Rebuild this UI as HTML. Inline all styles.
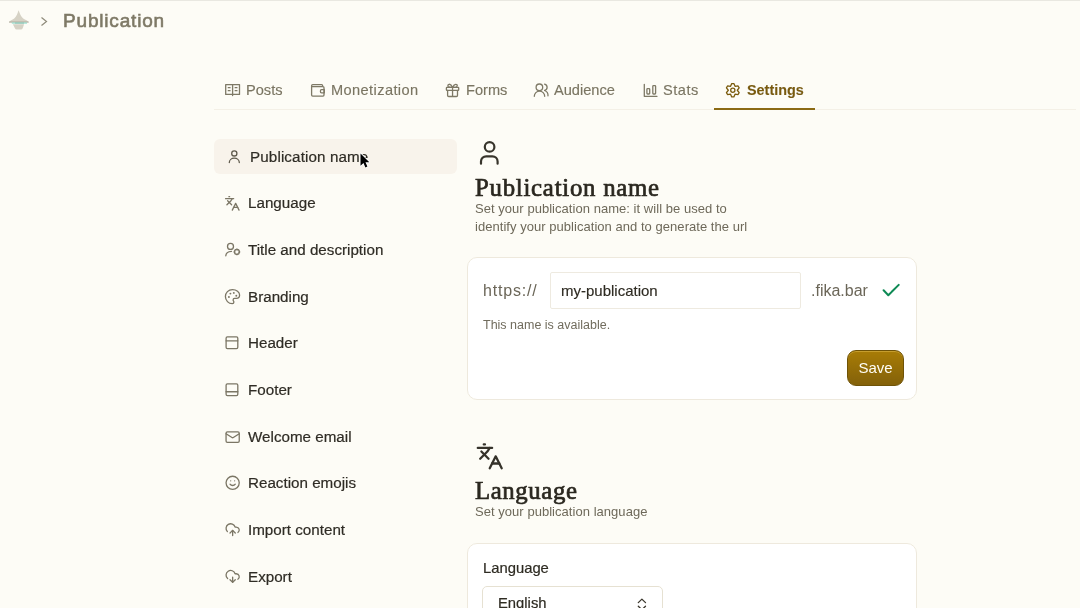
<!DOCTYPE html>
<html><head><meta charset="utf-8">
<style>
*{margin:0;padding:0;box-sizing:border-box}
html,body{width:1080px;height:608px;overflow:hidden;background:#FDFCF6;font-family:"Liberation Sans",sans-serif}
.a{will-change:transform}
.a{position:absolute;white-space:nowrap}
svg{position:absolute;overflow:visible}
.topline{left:0;top:0;width:1080px;height:1px;background:#E9E8E1}
.crumb{left:63px;top:9px;font-size:19px;font-weight:normal;-webkit-text-stroke:0.6px #7E7966;letter-spacing:0.82px;color:#7E7966;line-height:24px}
.tab{top:81px;font-size:14.6px;color:#7A7562;-webkit-text-stroke:0.15px #7A7562;line-height:18px}
.tabline{left:214px;top:109px;width:862px;height:1px;background:#F4F0E6}
.tabact{left:714px;top:108px;width:101px;height:2px;background:#8B6A14}
.nav{left:248px;font-size:15.2px;color:#2F2C25;-webkit-text-stroke:0.2px #2F2C25;line-height:18px}
.navbg{left:214px;top:139px;width:243px;height:35px;border-radius:6px;background:#F8F3EB}
.h2{font-family:"Liberation Serif",serif;font-weight:normal;-webkit-text-stroke:0.7px #2B2820;letter-spacing:0.6px;font-size:24.8px;color:#2B2820;line-height:28px;left:475px}
.sub{font-size:13px;color:#6E695A;letter-spacing:0.04px;line-height:18px;left:475px}
.card{background:#fff;border:1px solid #EEE9DD;border-radius:10px;left:467px;width:450px}
</style></head><body>
<div class="a topline"></div>

<!-- logo -->
<svg style="left:0;top:0" width="40" height="34" viewBox="0 0 40 34">
  <path d="M18.6 10.2 C17.6 13 16.6 16.6 14.2 18.4 C12.2 19.7 9.6 20.4 9 22.2 H28.7 C28.1 20.4 25.4 19.7 23.2 18.4 C20.8 16.6 19.7 13 18.6 10.2 Z" fill="#D6D2C5"/>
  <rect x="9" y="21.6" width="19.7" height="0.9" fill="#A8A494"/>
  <rect x="11.8" y="22.5" width="15.2" height="1.1" fill="#8FDCCB"/>
  <rect x="15" y="22.8" width="9" height="0.5" fill="#6E9E92"/>
  <path d="M12.9 24.3 H24.1 L22.7 28.3 Q22.2 29.6 21 29.6 H16.6 Q15.4 29.6 14.9 28.3 Z" fill="#D6D2C5"/>
</svg>
<svg style="left:0;top:0" width="60" height="34"><path d="M41.5 17.5 L46.5 21.5 L41.5 25.5" fill="none" stroke="#8E8A7A" stroke-width="1.2"/></svg>
<div class="a crumb">Publication</div>

<!-- tabs -->
<div class="a tabline"></div>
<div class="a tabact"></div>
<div class="a tab" style="left:246px">Posts</div>
<div class="a tab" style="left:331px;letter-spacing:0.4px">Monetization</div>
<div class="a tab" style="left:466px">Forms</div>
<div class="a tab" style="left:554px">Audience</div>
<div class="a tab" style="left:663px;letter-spacing:0.5px">Stats</div>
<div class="a tab" style="left:747px;font-weight:bold;color:#7A5A0B;font-size:14.4px">Settings</div>


<svg style="left:0;top:0" width="1080" height="608" viewBox="0 0 1080 608" fill="none" stroke-linecap="round" stroke-linejoin="round">
 <g stroke="#7E7966" stroke-width="1.3">
  <!-- posts book -->
  <path d="M225.7 84.6 H239.5 V94.4 H225.7 Z M232.6 84.6 V95.6"/>
  <path d="M228.2 87.7 H230.1 M228.2 90.7 H230.1 M235.1 87.7 H237 M235.1 90.7 H237" stroke-width="1.2"/>
  <!-- wallet -->
  <path d="M322.6 86.7 V85.5 Q322.6 84.6 321.6 84.6 H312.7 Q311.6 84.6 311.6 85.8 V95 Q311.6 96.1 312.7 96.1 H323 Q324 96.1 324 95 V87.8 Q324 86.7 323 86.7 H311.6"/>
  <path d="M324.3 89.6 H321.5 Q320.4 89.6 320.4 91.2 Q320.4 92.8 321.5 92.8 H324.3 Z"/>
  <!-- gift -->
  <rect x="446.4" y="87.4" width="12.3" height="3" rx="0.6"/>
  <path d="M447.6 90.4 V95.4 Q447.6 96.5 448.7 96.5 H456.4 Q457.5 96.5 457.5 95.4 V90.4 M452.55 87.4 V96.5"/>
  <path d="M452.55 87.4 Q451 84 449.3 84.3 Q447.6 84.6 448 86.2 Q448.4 87.4 452.55 87.4 Q457 87.4 457.2 86 Q457.4 84.4 455.8 84.3 Q454.1 84.2 452.55 87.4"/>
  <!-- audience -->
  <circle cx="539.4" cy="87.3" r="3.3"/>
  <path d="M534.3 96.3 A5.2 5.2 0 0 1 544.7 96.3"/>
  <path d="M544.6 84.1 A3.3 3.3 0 0 1 544.6 90.5 A5.2 5.2 0 0 1 548 95.8"/>
  <!-- stats -->
  <path d="M644.3 84.3 V96.3 H657"/>
  <rect x="646.9" y="88.6" width="2.8" height="5.4" rx="0.7"/>
  <rect x="652.8" y="85.6" width="2.8" height="8.4" rx="0.7"/>
 </g>
 <!-- gear settings -->
 <g stroke="#7A5A0B" stroke-width="1.3">
  <path d="M731.74 83.53 L733.86 83.53 L735.05 86.35 L738.08 85.97 L739.15 87.81 L737.30 90.25 L739.15 92.69 L738.08 94.53 L735.05 94.15 L733.86 96.97 L731.74 96.97 L730.55 94.15 L727.52 94.53 L726.45 92.69 L728.30 90.25 L726.45 87.81 L727.52 85.97 L730.55 86.35Z"/>
  <circle cx="732.8" cy="90.3" r="2.1"/>
 </g>
</svg>

<!-- side nav -->
<div class="a navbg"></div>
<div class="a nav" style="top:148px;left:250px;letter-spacing:0.12px">Publication name</div>
<div class="a nav" style="top:194px">Language</div>
<div class="a nav" style="top:241px">Title and description</div>
<div class="a nav" style="top:288px">Branding</div>
<div class="a nav" style="top:334px">Header</div>
<div class="a nav" style="top:381px">Footer</div>
<div class="a nav" style="top:428px">Welcome email</div>
<div class="a nav" style="top:474px">Reaction emojis</div>
<div class="a nav" style="top:521px">Import content</div>
<div class="a nav" style="top:568px">Export</div>

<!-- main section 1 -->
<div class="a h2" style="top:174px;letter-spacing:0.75px">Publication name</div>
<div class="a sub" style="top:200px">Set your publication name: it will be used to</div>
<div class="a sub" style="top:218px">identify your publication and to generate the url</div>

<div class="a card" style="top:257px;height:143px"></div>
<div class="a" style="left:483px;top:282px;font-size:16px;color:#6B6658;letter-spacing:0.8px">https://</div>
<div class="a" style="left:550px;top:272px;width:251px;height:37px;border:1px solid #EEEAE0;border-radius:2px;background:#fff"></div>
<div class="a" style="left:561px;top:282px;font-size:15px;color:#2E2B22;-webkit-text-stroke:0.15px #2E2B22">my-publication</div>
<div class="a" style="left:811px;top:282px;font-size:16px;color:#6B6658">.fika.bar</div>
<div class="a" style="left:483px;top:318px;font-size:12.5px;color:#716C5D">This name is available.</div>
<div class="a" style="left:847px;top:350px;width:57px;height:36px;border-radius:9px;background:linear-gradient(#A87C06,#83610A);border:1px solid #6F5307;box-shadow:inset 0 1px 0 rgba(255,220,120,0.35);color:#FFFDF5;font-size:15px;line-height:33px;text-align:center">Save</div>

<!-- main section 2 -->
<div class="a h2" style="top:477px">Language</div>
<div class="a sub" style="top:503px">Set your publication language</div>
<div class="a card" style="top:543px;height:100px"></div>
<div class="a" style="left:483px;top:560px;font-size:14.8px;color:#2E2B22;-webkit-text-stroke:0.2px #2E2B22">Language</div>
<div class="a" style="left:482px;top:586px;width:181px;height:40px;border:1px solid #E6E1D2;border-radius:5px;background:#fff"></div>
<div class="a" style="left:498px;top:595px;font-size:14.8px;color:#2E2B22;-webkit-text-stroke:0.2px #2E2B22">English</div>


<svg style="left:0;top:0" width="1080" height="608" viewBox="0 0 1080 608" fill="none" stroke-linecap="round" stroke-linejoin="round">
 <g stroke="#7B7665" stroke-width="1.3">
  <!-- person -->
  <circle cx="234.3" cy="153.4" r="2.6" stroke="#5E594B"/>
  <path d="M229.3 162.6 A5 4.4 0 0 1 239.3 162.6" stroke="#5E594B"/>
  <!-- translate -->
  <g transform="translate(224.23 195.33) scale(0.673)" stroke-width="1.93"><path d="m5 8 6 6"/><path d="m4 14 6-6 2-3"/><path d="M2 5h12"/><path d="M7 2h1"/><path d="m22 22-5-10-5 10"/><path d="M14 18h6"/></g>
  <!-- user cog -->
  <circle cx="230.5" cy="246.4" r="3"/>
  <path d="M225.8 255.8 Q226 251.6 231.5 251.3"/>
  <path d="M236.42 249.19 L237.38 249.19 L237.68 250.01 L238.48 249.65 L239.15 250.32 L238.79 251.12 L239.61 251.42 L239.61 252.38 L238.79 252.68 L239.15 253.48 L238.48 254.15 L237.68 253.79 L237.38 254.61 L236.42 254.61 L236.12 253.79 L235.32 254.15 L234.65 253.48 L235.01 252.68 L234.19 252.38 L234.19 251.42 L235.01 251.12 L234.65 250.32 L235.32 249.65 L236.12 250.01Z" stroke-width="1.2"/>
  <!-- palette -->
  <path d="M232.5 289.6 C228.4 289.6 225.4 292.7 225.4 296.6 C225.4 300.5 228.5 303.7 232.3 303.7 C233.3 303.7 233.9 303 233.9 302.1 C233.9 301.7 233.7 301.3 233.5 301 C233.2 300.7 233.1 300.3 233.1 299.9 C233.1 299 233.8 298.4 234.6 298.4 H236.4 C238.3 298.4 239.6 296.9 239.6 295.1 C239.6 292 236.5 289.6 232.5 289.6 Z"/>
 </g>
 <g fill="#7B7665">
  <circle cx="230.4" cy="293.6" r="0.95"/><circle cx="233.8" cy="292.9" r="0.95"/><circle cx="236.3" cy="295.8" r="0.95"/><circle cx="228.9" cy="297" r="0.95"/>
 </g>
 <g stroke="#7B7665" stroke-width="1.3">
  <!-- header -->
  <g transform="translate(224.15 335) scale(0.65)" stroke-width="2"><rect x="3" y="3" width="18" height="18" rx="2"/><path d="M3 9h18"/></g>
  <!-- footer -->
  <g transform="translate(224.15 382) scale(0.65)" stroke-width="2"><rect x="3" y="3" width="18" height="18" rx="2"/><path d="M3 15h18"/></g>
  <!-- mail -->
  <g transform="translate(224.74 429.2) scale(0.659)" stroke-width="1.97"><rect x="2" y="4" width="20" height="16" rx="2"/><path d="m22 7-8.97 5.7a1.94 1.94 0 0 1-2.06 0L2 7"/></g>
  <!-- smile -->
  <g transform="translate(224.74 474.94) scale(0.659)" stroke-width="1.97"><circle cx="12" cy="12" r="10"/><path d="M8 14s1.5 2 4 2 4-2 4-2"/><path d="M9 9h.01"/><path d="M15 9h.01"/></g>
  <!-- cloud upload -->
  <g transform="translate(224.74 521.78) scale(0.659)" stroke-width="1.97"><path d="M12 13v8"/><path d="M4 14.899A7 7 0 1 1 15.71 8h1.79a4.5 4.5 0 0 1 2.5 8.242"/><path d="m8 17 4-4 4 4"/></g>
  <!-- cloud download -->
  <g transform="translate(224.74 568.48) scale(0.659)" stroke-width="1.97"><path d="M12 13v8l-4-4"/><path d="m12 21 4-4"/><path d="M4.393 15.269A7 7 0 1 1 15.71 8h1.79a4.5 4.5 0 0 1 2.436 8.284"/></g>
 </g>
 <!-- main person icon -->
 <g stroke="#38352C" stroke-width="2.2" fill="none">
  <circle cx="489.6" cy="146.9" r="4.8"/>
  <path d="M481 163.7 V161.5 A5.2 5.2 0 0 1 486.2 156.3 H492.4 A5.2 5.2 0 0 1 497.6 161.5 V163.7"/>
 </g>
 <!-- main translate -->
 <g stroke="#35322A" transform="translate(475.4 442) scale(1.195)" stroke-width="1.9"><path d="m5 8 6 6"/><path d="m4 14 6-6 2-3"/><path d="M2 5h12"/><path d="M7 2h1"/><path d="m22 22-5-10-5 10"/><path d="M14 18h6"/></g>
 <!-- check -->
 <path d="M883.6 290.3 L888.3 295.2 L898.7 284.9" stroke="#0E8A55" stroke-width="2"/>
 <!-- select chevron -->
 <path d="M638.3 602.6 L641.9 599.1 L645.5 602.6 M638.3 606.3 L641.9 609.8 L645.5 606.3" stroke="#3A362C" stroke-width="1.3"/>
</svg>
<!-- cursor -->
<svg style="left:0;top:0" width="1080" height="608" viewBox="0 0 1080 608">
 <path d="M360.5 153.4 L360.5 165.8 L363.5 163.1 L365.4 167.4 L367.4 166.5 L365.5 162.3 L369.3 162.3 Z" fill="#000" stroke="#fff" stroke-width="1.5" stroke-linejoin="round" paint-order="stroke"/>
</svg>
</body></html>
